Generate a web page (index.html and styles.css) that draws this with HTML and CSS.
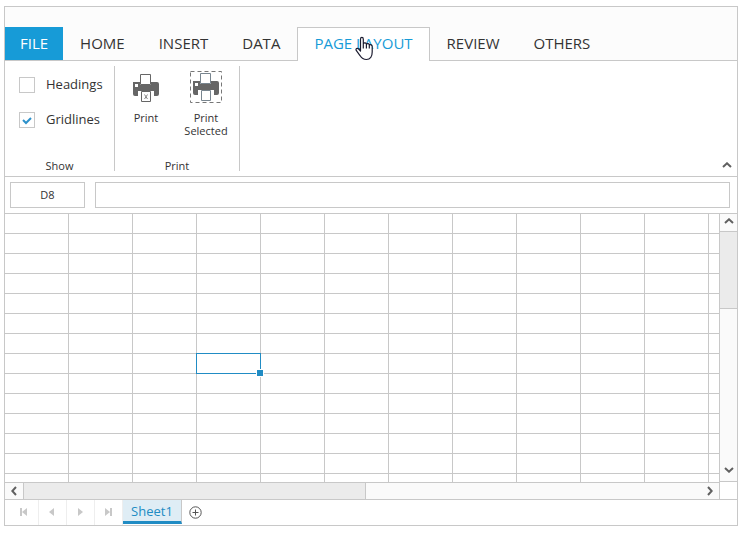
FILE: index.html
```html
<!DOCTYPE html>
<html lang="en">
<head>
<meta charset="utf-8">
<title>Spreadsheet</title>
<link rel="stylesheet" href="styles.css">
</head>
<body>
<main class="sheet-app">
  <nav class="tabs" aria-label="Ribbon tabs">
    <button class="tab tab-file">FILE</button>
    <button class="tab">HOME</button>
    <button class="tab">INSERT</button>
    <button class="tab">DATA</button>
    <button class="tab tab-active">PAGE LAYOUT
      <svg class="pointer" width="18" height="26" viewBox="0 0 18 26" aria-hidden="true"><path d="M5.5 15V3.200C5.500 .8 8.300.8 8.300 3.200V7.600C9.100 6.300 11.200 6.600 11.400 8.200C12.400 7.200 14.200 7.600 14.300 9C15.500 8.200 17.200 9 17.200 10.500V16C17.200 20.500 15.300 23.500 11.400 23.500C8.400 23.500 6.600 22.200 5.200 19.800L1.400 14.700C.2 12.800 2.300 11.500 3.700 13ZM8.300 7.500V12.500M11.400 8.200V12.500M14.300 9V12.500" fill="#fff" stroke="#1c1c30" stroke-width="1.2" stroke-linejoin="round"/></svg>
    </button>
    <button class="tab">REVIEW</button>
    <button class="tab">OTHERS</button>
  </nav>

  <section class="ribbon">
    <div class="group group-show">
      <div class="checks">
        <label class="check"><input type="checkbox"><span>Headings</span></label>
        <label class="check"><input type="checkbox" checked><span>Gridlines</span></label>
      </div>
      <div class="caption">Show</div>
    </div>
    <div class="group group-print">
      <div class="tools">
        <button class="tool">
          <svg width="34" height="34" viewBox="0 0 34 34" aria-hidden="true">
            <path d="M11.500 4.500H21.500V14.500H11.500Z" fill="#fff" stroke="#666"/>
            <path d="M4 12H11V15H22V12H28Q30 12 30 14V24Q30 26 28 26H25V21H9V26H6Q4 26 4 24Z" fill="#666"/>
            <path d="M6 14H9V17H6Z" fill="#fff"/>
            <path d="M12.500 21.500H21.500V31.500H12.500Z" fill="#fff" stroke="#666"/>
            <path d="M15.500 24.500L18.500 29M18.500 24.500L15.500 29" stroke="#888"/>
          </svg>
          <span>Print</span>
        </button>
        <button class="tool">
          <svg width="34" height="34" viewBox="0 0 34 34" aria-hidden="true">
            <path d="M1.500 1.500H32.500V32.500H1.500Z" fill="none" stroke="#777" stroke-dasharray="4 3"/>
            <path d="M11.500 3.500H21.500V13.500H11.500Z" fill="#fff" stroke="#78858f"/>
            <path d="M4 11H11V14H22V11H28Q30 11 30 13V23Q30 25 28 25H25V20H9V25H6Q4 25 4 23Z" fill="#666"/>
            <path d="M6 13H9V16H6Z" fill="#fff"/>
            <path d="M12.500 20.500H21.500V30.500H12.500Z" fill="#fff" stroke="#78858f"/>
          </svg>
          <span>Print Selected</span>
        </button>
      </div>
      <div class="caption">Print</div>
    </div>
    <button class="collapse" aria-label="Collapse ribbon"><svg width="10" height="6" viewBox="0 0 10 6"><path d="M1 5L5 1.300L9 5"/></svg></button>
  </section>

  <section class="formula">
    <input class="cell-name" aria-label="Cell name" value="D8">
    <input class="cell-formula" aria-label="Formula">
  </section>

  <section class="work">
    <div class="grid-view">
      <table class="grid" aria-label="Sheet cells">
        <tbody>
          <tr><td></td><td></td><td></td><td></td><td></td><td></td><td></td><td></td><td></td><td></td><td></td><td></td></tr>
          <tr><td></td><td></td><td></td><td></td><td></td><td></td><td></td><td></td><td></td><td></td><td></td><td></td></tr>
          <tr><td></td><td></td><td></td><td></td><td></td><td></td><td></td><td></td><td></td><td></td><td></td><td></td></tr>
          <tr><td></td><td></td><td></td><td></td><td></td><td></td><td></td><td></td><td></td><td></td><td></td><td></td></tr>
          <tr><td></td><td></td><td></td><td></td><td></td><td></td><td></td><td></td><td></td><td></td><td></td><td></td></tr>
          <tr><td></td><td></td><td></td><td></td><td></td><td></td><td></td><td></td><td></td><td></td><td></td><td></td></tr>
          <tr><td></td><td></td><td></td><td></td><td></td><td></td><td></td><td></td><td></td><td></td><td></td><td></td></tr>
          <tr><td></td><td></td><td></td><td class="selected"></td><td></td><td></td><td></td><td></td><td></td><td></td><td></td><td></td></tr>
          <tr><td></td><td></td><td></td><td></td><td></td><td></td><td></td><td></td><td></td><td></td><td></td><td></td></tr>
          <tr><td></td><td></td><td></td><td></td><td></td><td></td><td></td><td></td><td></td><td></td><td></td><td></td></tr>
          <tr><td></td><td></td><td></td><td></td><td></td><td></td><td></td><td></td><td></td><td></td><td></td><td></td></tr>
          <tr><td></td><td></td><td></td><td></td><td></td><td></td><td></td><td></td><td></td><td></td><td></td><td></td></tr>
          <tr><td></td><td></td><td></td><td></td><td></td><td></td><td></td><td></td><td></td><td></td><td></td><td></td></tr>
          <tr><td></td><td></td><td></td><td></td><td></td><td></td><td></td><td></td><td></td><td></td><td></td><td></td></tr>
        </tbody>
      </table>
    </div>
    <div class="vscroll">
      <button aria-label="Scroll up"><svg width="10" height="6" viewBox="0 0 10 6"><path d="M1 5L5 1.300L9 5"/></svg></button>
      <div class="vthumb"></div>
      <button class="down" aria-label="Scroll down"><svg width="10" height="6" viewBox="0 0 10 6"><path d="M1 1L5 4.700L9 1"/></svg></button>
    </div>
    <div class="hscroll">
      <button aria-label="Scroll left"><svg width="6" height="10" viewBox="0 0 6 10"><path d="M5 1L1.300 5L5 9"/></svg></button>
      <div class="hthumb"></div>
      <button class="right" aria-label="Scroll right"><svg width="6" height="10" viewBox="0 0 6 10"><path d="M1 1L4.700 5L1 9"/></svg></button>
    </div>
  </section>

  <footer class="pager">
    <button class="page" aria-label="First sheet"><svg width="8" height="8" viewBox="0 0 8 8"><path d="M0 0H2V8H0ZM7 0V8L2 4Z"/></svg></button>
    <button class="page" aria-label="Previous sheet"><svg width="8" height="8" viewBox="0 0 8 8"><path d="M6 0V8L1 4Z"/></svg></button>
    <button class="page" aria-label="Next sheet"><svg width="8" height="8" viewBox="0 0 8 8"><path d="M2 0V8L7 4Z"/></svg></button>
    <button class="page" aria-label="Last sheet"><svg width="8" height="8" viewBox="0 0 8 8"><path d="M6 0H8V8H6ZM1 0V8L6 4Z"/></svg></button>
    <button class="sheet-tab">Sheet1</button>
    <button class="add" aria-label="Add sheet"><svg width="13" height="13" viewBox="0 0 13 13"><circle cx="6.500" cy="6.500" r="5.700"/><path d="M3.500 6.500H9.500M6.500 3.500V9.500"/></svg></button>
  </footer>
</main>
</body>
</html>
```
FILE: styles.css
```css
* { box-sizing: border-box; }

body {
  margin: 6px 4px;
  background: #fff;
  color: #333;
  font-family: "Open Sans", "Noto Sans", sans-serif;
  font-size: 11px;
}

button, input {
  margin: 0;
  padding: 0;
  border: 0;
  background: none;
  color: inherit;
  font: inherit;
}

svg { display: block; }

.sheet-app { border: 1px solid #c8c8c8; }

.tabs {
  display: flex;
  padding-top: 20px;
  border-bottom: 1px solid #c8c8c8;
  background: #fcfcfc;
}

.tab {
  height: 33px;
  padding: 0 16px 2px;
  border: 1px solid transparent;
  border-bottom: 0;
  font-size: 15px;
  white-space: nowrap;
}

.tab-file {
  padding: 0 14px 2px;
  border-color: #179bd7;
  background: #179bd7;
  color: #fff;
}

.tab-active {
  position: relative;
  height: 34px;
  margin-bottom: -1px;
  padding-bottom: 3px;
  border-color: #c8c8c8;
  background: #fff;
  color: #179bd7;
}

.pointer {
  position: absolute;
  left: 57px;
  top: 8px;
}

.ribbon {
  display: flex;
  padding: 5px 0;
  border-bottom: 1px solid #c8c8c8;
}

.group {
  display: flex;
  flex-direction: column;
  justify-content: space-between;
  height: 105px;
  border-right: 1px solid #c8c8c8;
}

.group-show { width: 110px; }
.group-print { width: 125px; }

.caption {
  line-height: 10px;
  text-align: center;
}

.checks {
  display: flex;
  flex-direction: column;
  gap: 15px;
  padding: 9px 0 0 14px;
}

.check {
  display: flex;
  align-items: center;
  gap: 11px;
  height: 20px;
  font-size: 13px;
}

.check span { padding-bottom: 2px; }

.check input {
  appearance: none;
  width: 16px;
  height: 16px;
  border: 1px solid #c8c8c8;
}

.check input:checked {
  background: url("data:image/svg+xml,%3Csvg xmlns='http://www.w3.org/2000/svg' viewBox='0 0 14 14'%3E%3Cpath d='M3 7l3 3 5-5' fill='none' stroke='%232d91cb' stroke-width='2'/%3E%3C/svg%3E");
}

.tools {
  display: flex;
  padding-left: 1px;
}

.tool {
  display: flex;
  flex-direction: column;
  align-items: center;
  gap: 7px;
  width: 60px;
  padding: 4px 5px 0;
  line-height: 13px;
}

.collapse {
  align-self: flex-end;
  margin: 0 5px 3px auto;
}

.collapse path, .vscroll path, .hscroll path {
  fill: none;
  stroke: #606060;
  stroke-width: 2;
}

.formula {
  display: flex;
  gap: 10px;
  padding: 5px 7px 5px 5px;
  border-bottom: 1px solid #c8c8c8;
}

.formula input {
  height: 26px;
  padding-bottom: 2px;
  border: 1px solid #c8c8c8;
}

.cell-name {
  width: 75px;
  text-align: center;
}

.cell-formula {
  flex: 1;
  min-width: 0;
  padding: 0 6px;
}

.work {
  display: grid;
  grid-template-columns: 1fr 18px;
  grid-template-rows: 268px 18px;
}

.grid-view {
  min-width: 0;
  overflow: hidden;
}

.grid {
  width: 768px;
  table-layout: fixed;
  border-collapse: separate;
  border-spacing: 0;
}

.grid td {
  height: 20px;
  padding: 0;
  border-right: 1px solid #c8c8c8;
  border-bottom: 1px solid #c8c8c8;
}

.grid .selected {
  position: relative;
  border-color: #218cc4;
  box-shadow: -1px -1px 0 #218cc4, 0 -1px 0 #218cc4, -1px 0 0 #218cc4;
}

.selected::after {
  content: "";
  position: absolute;
  right: -4px;
  bottom: -4px;
  width: 6px;
  height: 6px;
  border: 1px solid #fff;
  background: #218cc4;
}

.vscroll {
  display: flex;
  flex-direction: column;
  border-left: 1px solid #c8c8c8;
  border-bottom: 1px solid #c8c8c8;
  background: #fafafa;
}

.vscroll button, .hscroll button {
  display: flex;
  align-items: center;
  justify-content: center;
}

.vscroll button {
  height: 17px;
  padding-bottom: 3px;
}

.vthumb {
  height: 78px;
  border: solid #c8c8c8;
  border-width: 1px 0;
  background: #ebebeb;
}

.vscroll .down {
  height: 22px;
  margin-top: auto;
  padding-bottom: 0;
}

.hscroll {
  display: flex;
  margin-right: -1px;
  border: solid #c8c8c8;
  border-width: 1px 1px 1px 0;
  background: #fafafa;
}

.hscroll button { width: 18px; }

.hthumb {
  width: 48%;
  border: solid #c8c8c8;
  border-width: 0 1px;
  background: #ebebeb;
}

.hscroll .right { margin-left: auto; }

.work::after {
  content: "";
  border-bottom: 1px solid #c8c8c8;
}

.pager {
  display: flex;
  height: 25px;
  padding-left: 6px;
}

.page {
  display: flex;
  align-items: center;
  justify-content: center;
  width: 28px;
  padding: 0 2px 2px 0;
  border-right: 1px solid #eee;
}

.page path { fill: #c8c8c8; }

.sheet-tab {
  width: 59px;
  height: 24px;
  border-right: 1px solid #c8c8c8;
  border-bottom: 3px solid #218cc4;
  background: #dfedf5;
  color: #218cc4;
  font-size: 13px;
  line-height: 20px;
}

.add { padding: 0 7px; }

.add svg {
  fill: none;
  stroke: #555;
}
```
